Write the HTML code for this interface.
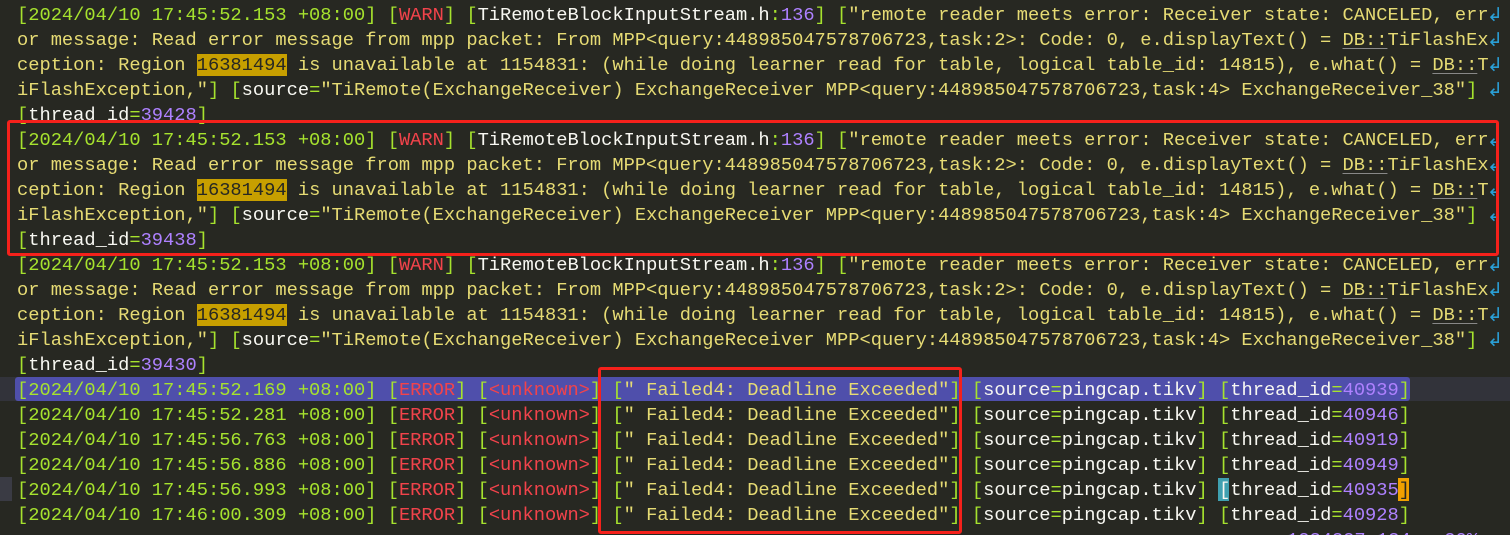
<!DOCTYPE html>
<html><head><meta charset="utf-8"><style>
html,body{margin:0;padding:0;background:#272822;width:1510px;height:535px;overflow:hidden}
body{position:relative;font-family:"Liberation Mono","DejaVu Sans Mono",monospace;font-size:18.73px}
.r{position:absolute;left:17px;height:25px;line-height:25px;white-space:pre;color:#e6db74;margin-top:1px}
.g{color:#a6e22e}.e{color:#f2434b}.w{color:#f8f8f2}.p{color:#ae81ff}
.hl{background:#c79f00;color:#272822}
.u{text-decoration:underline;text-decoration-color:#888;text-underline-offset:3px}
.wa{position:absolute;left:1487px;color:#2a9fd6;height:25px;line-height:25px;font-family:"DejaVu Sans",sans-serif;font-size:19px;margin-top:1px}
.box{position:absolute;border:3px solid #f5211b;border-radius:3px;box-sizing:border-box}
</style></head><body>
<div style="position:absolute;left:0;top:377px;width:1510px;height:24px;background:#32333a"></div>
<div style="position:absolute;left:15px;top:377px;width:1395px;height:24px;background:#4f4fab;border-radius:3px"></div>
<div style="position:absolute;left:0;top:477px;width:12px;height:24px;background:#3a3b44"></div>
<div style="position:absolute;left:1218px;top:478px;width:11px;height:23px;background:#3fa0b0"></div>
<div style="position:absolute;left:1398px;top:478px;width:11px;height:23px;background:#f0a000"></div>

<div class="r" style="top:2px"><span class="g">[</span><span class="g">2024/04/10 17:45:52.153 +08:00</span><span class="g">]</span> <span class="g">[</span><span class="e">WARN</span><span class="g">]</span> <span class="g">[</span><span class="w">TiRemoteBlockInputStream.h</span><span class="g">:</span><span class="p">136</span><span class="g">]</span> <span class="g">[</span>"remote reader meets error: Receiver state: CANCELED, err</div>
<div class="r" style="top:27px">or message: Read error message from mpp packet: From MPP&lt;query:448985047578706723,task:2&gt;: Code: 0, e.displayText() = <span class="u">DB::</span>TiFlashEx</div>
<div class="r" style="top:52px">ception: Region <span class="hl">16381494</span> is unavailable at 1154831: (while doing learner read for table, logical table_id: 14815), e.what() = <span class="u">DB::</span>T</div>
<div class="r" style="top:77px">iFlashException,"<span class="g">]</span> <span class="g">[</span><span class="w">source</span><span class="g">=</span>"TiRemote(ExchangeReceiver) ExchangeReceiver MPP&lt;query:448985047578706723,task:4&gt; ExchangeReceiver_38"<span class="g">]</span></div>
<div class="r" style="top:102px"><span class="g">[</span><span class="w">thread_id</span><span class="g">=</span><span class="p">39428</span><span class="g">]</span></div>

<div class="r" style="top:127px"><span class="g">[2024/04/10 17:45:52.153 +08:00]</span> <span class="g">[</span><span class="e">WARN</span><span class="g">]</span> <span class="g">[</span><span class="w">TiRemoteBlockInputStream.h</span><span class="g">:</span><span class="p">136</span><span class="g">]</span> <span class="g">[</span>"remote reader meets error: Receiver state: CANCELED, err</div>
<div class="r" style="top:152px">or message: Read error message from mpp packet: From MPP&lt;query:448985047578706723,task:2&gt;: Code: 0, e.displayText() = <span class="u">DB::</span>TiFlashEx</div>
<div class="r" style="top:177px">ception: Region <span class="hl">16381494</span> is unavailable at 1154831: (while doing learner read for table, logical table_id: 14815), e.what() = <span class="u">DB::</span>T</div>
<div class="r" style="top:202px">iFlashException,"<span class="g">]</span> <span class="g">[</span><span class="w">source</span><span class="g">=</span>"TiRemote(ExchangeReceiver) ExchangeReceiver MPP&lt;query:448985047578706723,task:4&gt; ExchangeReceiver_38"<span class="g">]</span></div>
<div class="r" style="top:227px"><span class="g">[</span><span class="w">thread_id</span><span class="g">=</span><span class="p">39438</span><span class="g">]</span></div>

<div class="r" style="top:252px"><span class="g">[2024/04/10 17:45:52.153 +08:00]</span> <span class="g">[</span><span class="e">WARN</span><span class="g">]</span> <span class="g">[</span><span class="w">TiRemoteBlockInputStream.h</span><span class="g">:</span><span class="p">136</span><span class="g">]</span> <span class="g">[</span>"remote reader meets error: Receiver state: CANCELED, err</div>
<div class="r" style="top:277px">or message: Read error message from mpp packet: From MPP&lt;query:448985047578706723,task:2&gt;: Code: 0, e.displayText() = <span class="u">DB::</span>TiFlashEx</div>
<div class="r" style="top:302px">ception: Region <span class="hl">16381494</span> is unavailable at 1154831: (while doing learner read for table, logical table_id: 14815), e.what() = <span class="u">DB::</span>T</div>
<div class="r" style="top:327px">iFlashException,"<span class="g">]</span> <span class="g">[</span><span class="w">source</span><span class="g">=</span>"TiRemote(ExchangeReceiver) ExchangeReceiver MPP&lt;query:448985047578706723,task:4&gt; ExchangeReceiver_38"<span class="g">]</span></div>
<div class="r" style="top:352px"><span class="g">[</span><span class="w">thread_id</span><span class="g">=</span><span class="p">39430</span><span class="g">]</span></div>

<div class="r" style="top:377px"><span class="g">[2024/04/10 17:45:52.169 +08:00]</span> <span class="g">[</span><span class="e">ERROR</span><span class="g">]</span> <span class="g">[</span><span class="e">&lt;unknown&gt;</span><span class="g">]</span> <span class="g">[</span>" Failed4: Deadline Exceeded"<span class="g">]</span> <span class="g">[</span><span class="w">source</span><span class="g">=</span><span class="w">pingcap.tikv</span><span class="g">]</span> <span class="g">[</span><span class="w">thread_id</span><span class="g">=</span><span class="p">40939</span><span class="g">]</span></div>
<div class="r" style="top:402px"><span class="g">[2024/04/10 17:45:52.281 +08:00]</span> <span class="g">[</span><span class="e">ERROR</span><span class="g">]</span> <span class="g">[</span><span class="e">&lt;unknown&gt;</span><span class="g">]</span> <span class="g">[</span>" Failed4: Deadline Exceeded"<span class="g">]</span> <span class="g">[</span><span class="w">source</span><span class="g">=</span><span class="w">pingcap.tikv</span><span class="g">]</span> <span class="g">[</span><span class="w">thread_id</span><span class="g">=</span><span class="p">40946</span><span class="g">]</span></div>
<div class="r" style="top:427px"><span class="g">[2024/04/10 17:45:56.763 +08:00]</span> <span class="g">[</span><span class="e">ERROR</span><span class="g">]</span> <span class="g">[</span><span class="e">&lt;unknown&gt;</span><span class="g">]</span> <span class="g">[</span>" Failed4: Deadline Exceeded"<span class="g">]</span> <span class="g">[</span><span class="w">source</span><span class="g">=</span><span class="w">pingcap.tikv</span><span class="g">]</span> <span class="g">[</span><span class="w">thread_id</span><span class="g">=</span><span class="p">40919</span><span class="g">]</span></div>
<div class="r" style="top:452px"><span class="g">[2024/04/10 17:45:56.886 +08:00]</span> <span class="g">[</span><span class="e">ERROR</span><span class="g">]</span> <span class="g">[</span><span class="e">&lt;unknown&gt;</span><span class="g">]</span> <span class="g">[</span>" Failed4: Deadline Exceeded"<span class="g">]</span> <span class="g">[</span><span class="w">source</span><span class="g">=</span><span class="w">pingcap.tikv</span><span class="g">]</span> <span class="g">[</span><span class="w">thread_id</span><span class="g">=</span><span class="p">40949</span><span class="g">]</span></div>
<div class="r" style="top:477px"><span class="g">[2024/04/10 17:45:56.993 +08:00]</span> <span class="g">[</span><span class="e">ERROR</span><span class="g">]</span> <span class="g">[</span><span class="e">&lt;unknown&gt;</span><span class="g">]</span> <span class="g">[</span>" Failed4: Deadline Exceeded"<span class="g">]</span> <span class="g">[</span><span class="w">source</span><span class="g">=</span><span class="w">pingcap.tikv</span><span class="g">]</span> <span class="w">[</span><span class="w">thread_id</span><span class="g">=</span><span class="p">40935</span><span style="color:#272822">]</span></div>
<div class="r" style="top:502px"><span class="g">[2024/04/10 17:46:00.309 +08:00]</span> <span class="g">[</span><span class="e">ERROR</span><span class="g">]</span> <span class="g">[</span><span class="e">&lt;unknown&gt;</span><span class="g">]</span> <span class="g">[</span>" Failed4: Deadline Exceeded"<span class="g">]</span> <span class="g">[</span><span class="w">source</span><span class="g">=</span><span class="w">pingcap.tikv</span><span class="g">]</span> <span class="g">[</span><span class="w">thread_id</span><span class="g">=</span><span class="p">40928</span><span class="g">]</span></div>
<div class="r" style="top:527px;left:1287px;color:#ae81ff">1234327 134   20%</div>

<div class="wa" style="top:2px">↲</div><div class="wa" style="top:27px">↲</div><div class="wa" style="top:52px">↲</div><div class="wa" style="top:77px">↲</div>
<div class="wa" style="top:127px">↲</div><div class="wa" style="top:152px">↲</div><div class="wa" style="top:177px">↲</div><div class="wa" style="top:202px">↲</div>
<div class="wa" style="top:252px">↲</div><div class="wa" style="top:277px">↲</div><div class="wa" style="top:302px">↲</div><div class="wa" style="top:327px">↲</div>

<div class="box" style="left:7px;top:120px;width:1492px;height:136px"></div>
<div class="box" style="left:598px;top:367px;width:364px;height:167px"></div>
</body></html>
